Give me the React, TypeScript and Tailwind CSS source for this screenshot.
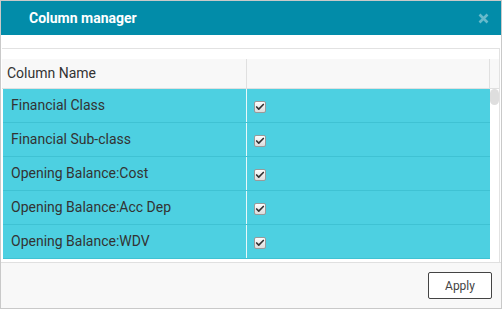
import { Check } from "lucide-react";

const columns = [
  "Financial Class",
  "Financial Sub-class",
  "Opening Balance:Cost",
  "Opening Balance:Acc Dep",
  "Opening Balance:WDV",
];

function FakeCheckbox() {
  return (
    <span className="flex h-[12px] w-[12px] items-center justify-center rounded-[2px] border border-[#9a9a9a] bg-gradient-to-b from-[#fdfdfd] to-[#dcdcdc]">
      <Check size={10} strokeWidth={4} className="text-[#333]" />
    </span>
  );
}

export default function App() {
  return (
    <div
      className="flex h-[309px] w-[502px] flex-col border border-[#c9c9c9] bg-white"
      style={{ fontFamily: "Roboto, 'Liberation Sans', sans-serif" }}
    >
      {/* Header */}
      <div className="flex h-[34px] shrink-0 items-center justify-between bg-[#028ca9] pl-[28px] pr-[12px]">
        <span className="text-[14px] font-bold text-white">Column manager</span>
        <svg width="11" height="11" viewBox="0 0 11 11">
          <path d="M1.5 1.5 L9.5 9.5 M9.5 1.5 L1.5 9.5" stroke="rgba(255,255,255,0.4)" strokeWidth="2.6" />
        </svg>
      </div>

      {/* Body */}
      <div className="flex-1 pt-[13px]">
        <div className="ml-[1px] mr-[1px] border-t border-r border-[#e2e2e2]">
          <div className="h-[10px] bg-white" />
          {/* Header row */}
          <div className="flex h-[30px] border-b border-[#e0e0e0] bg-[#f8f8f8]">
            <div className="flex w-[245px] items-center border-r border-[#e0e0e0] pl-[5px] text-[14px] text-[#333]">
              Column Name
            </div>
            <div className="w-[243px] border-r border-[#e0e0e0]" />
            <div className="flex-1" />
          </div>
          {/* Rows */}
          <div className="flex h-[173px]">
            <div className="w-[489px] pl-[1px]">
              {columns.map((c) => (
                <div key={c} className="flex h-[34px] border-b border-[#3fc2d3] bg-[#4dd0e1]">
                  <div className="flex w-[244px] items-center border-r border-[#e8f8fa] pl-[8px] text-[14px] text-[#333]">
                    {c}
                  </div>
                  <div className="flex flex-1 items-center pl-[7px] pt-[3px]">
                    <FakeCheckbox />
                  </div>
                </div>
              ))}
            </div>
            <div className="flex-1">
              <div className="mx-auto h-[16px] w-[9px] rounded-full bg-[#dedede]" />
            </div>
          </div>
        </div>
      </div>

      {/* Footer */}
      <div className="flex h-[46px] shrink-0 items-start justify-end border-t border-[#e0e0e0] bg-[#f8f8f8] pr-[9px] pt-[9px]">
        <button className="h-[27px] w-[64px] rounded-[2px] border border-[#444] bg-white text-[12px] text-[#444]">
          Apply
        </button>
      </div>
    </div>
  );
}
